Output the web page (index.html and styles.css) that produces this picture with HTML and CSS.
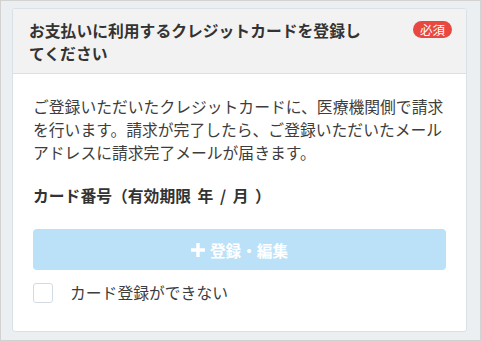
FILE: index.html
```html
<!DOCTYPE html>
<html lang="ja">
<head>
<meta charset="utf-8">
<link rel="stylesheet" href="styles.css">
</head>
<body>
<div class="frame">
  <section class="card">
    <header class="card-head">
      <h2 class="card-title">お支払いに利用するクレジットカードを登録してください</h2>
      <span class="badge">必須</span>
    </header>
    <div class="card-body">
      <p class="desc">ご登録いただいたクレジットカードに、医療機関側で請求を行います。請求が完了したら、ご登録いただいたメールアドレスに請求完了メールが届きます。</p>
      <div class="field-label">カード番号（有効期限 年 / 月 ）</div>
      <button class="btn" type="button">
        <svg class="plus" width="14" height="14" viewBox="0 0 14 14"><path d="M5.3 0h3.4v5.3H14v3.4H8.7V14H5.3V8.7H0V5.3h5.3z" fill="#fff"/></svg>
        <span>登録・編集</span>
      </button>
      <label class="check">
        <span class="box"></span>
        <span class="check-text">カード登録ができない</span>
      </label>
    </div>
  </section>
</div>
</body>
</html>
```

FILE: styles.css
```css
html, body {
  margin: 0;
  padding: 0;
}
body {
  font-family: "Noto Sans CJK JP", "Noto Sans", sans-serif;
  color: #333;
}
.frame {
  box-sizing: border-box;
  width: 481px;
  height: 341px;
  border: 1px solid #d2d2d2;
  background: #ebeff2;
  padding: 7px 13px 9px 11px;
}
.card {
  background: #fff;
  border: 1px solid #d9e0e6;
  border-radius: 3px;
  overflow: hidden;
}
.card-head {
  display: flex;
  align-items: flex-start;
  justify-content: space-between;
  background: #f2f2f2;
  border-bottom: 1px solid #d9e0e6;
  padding: 10px 14px 8px 16px;
}
.card-title {
  margin: 0;
  width: 342px;
  font-size: 15.8px;
  line-height: 23px;
  font-weight: bold;
  color: #333;
}
.badge {
  margin-top: 2px;
  background: #e8483f;
  color: #fff;
  font-size: 12.5px;
  line-height: 17px;
  height: 17px;
  padding: 0 7px;
  border-radius: 9px;
}
.card-body {
  padding: 21px 20px 28px 20px;
}
.desc {
  margin: 0;
  font-size: 15.8px;
  line-height: 23px;
  color: #3d3d3d;
}
.field-label {
  margin-top: 20px;
  font-size: 15.8px;
  line-height: 23px;
  font-weight: bold;
  color: #333;
  word-spacing: 3px;
}
.btn {
  margin-top: 22px;
  display: flex;
  align-items: center;
  justify-content: center;
  gap: 5px;
  width: 100%;
  height: 41px;
  border: none;
  border-radius: 4px;
  background: #bbe1f9;
  color: #fff;
  font-family: inherit;
  font-size: 15.6px;
  font-weight: bold;
  padding: 0;
}
.plus {
  display: block;
}
.check {
  margin-top: 13px;
  display: flex;
  align-items: center;
  gap: 17px;
}
.box {
  box-sizing: border-box;
  width: 20px;
  height: 20px;
  border: 1px solid #d3dbe2;
  border-radius: 3px;
  background: #fff;
}
.check-text {
  font-size: 15.8px;
  line-height: 20px;
  color: #3d3d3d;
}
```
